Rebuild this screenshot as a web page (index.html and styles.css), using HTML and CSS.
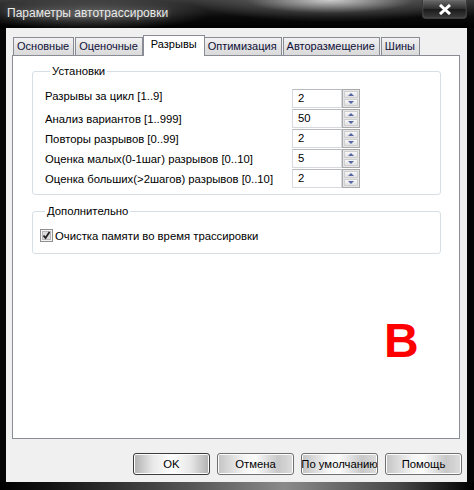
FILE: index.html
```html
<!DOCTYPE html>
<html lang="ru">
<head>
    <meta charset="UTF-8">
    <title>Параметры автотрассировки</title>
    <link rel="stylesheet" href="styles.css">
</head>
<body>
<div class="window">
    <div class="titlebar">
        <span class="title">Параметры автотрассировки</span>
        <div class="close">
            <svg width="14" height="11" viewBox="0 0 14 11"><path d="M2 1 L12 10 M12 1 L2 10" stroke="#fff" stroke-width="3"/></svg>
        </div>
    </div>

    <div class="client">
        <div class="tabs">
            <div class="tab">Основные</div>
            <div class="tab">Оценочные</div>
            <div class="tab active">Разрывы</div>
            <div class="tab">Оптимизация</div>
            <div class="tab">Авторазмещение</div>
            <div class="tab">Шины</div>
        </div>

        <div class="panel">
            <fieldset class="group group-main">
                <legend>Установки</legend>
                <div class="row">
                    <span class="lbl first">Разрывы за цикл [1..9]</span>
                    <div class="spin"><span class="val">2</span><div class="arrows"><i class="up"></i><i class="down"></i></div></div>
                </div>
                <div class="row">
                    <span class="lbl">Анализ вариантов [1..999]</span>
                    <div class="spin"><span class="val">50</span><div class="arrows"><i class="up"></i><i class="down"></i></div></div>
                </div>
                <div class="row">
                    <span class="lbl">Повторы разрывов [0..99]</span>
                    <div class="spin"><span class="val">2</span><div class="arrows"><i class="up"></i><i class="down"></i></div></div>
                </div>
                <div class="row">
                    <span class="lbl">Оценка малых(0-1шаг) разрывов [0..10]</span>
                    <div class="spin"><span class="val">5</span><div class="arrows"><i class="up"></i><i class="down"></i></div></div>
                </div>
                <div class="row">
                    <span class="lbl">Оценка больших(&gt;2шагов) разрывов [0..10]</span>
                    <div class="spin"><span class="val">2</span><div class="arrows"><i class="up"></i><i class="down"></i></div></div>
                </div>
            </fieldset>

            <fieldset class="group group-extra">
                <legend>Дополнительно</legend>
                <label class="check">
                    <svg width="13" height="13" viewBox="0 0 13 13">
                        <rect x="0.5" y="0.5" width="12" height="12" fill="#f4f4f4" stroke="#8e8f8f"/>
                        <rect x="2.5" y="2.5" width="8" height="8" fill="#dcdcdc" stroke="#b8b8b8"/>
                        <path d="M3.5 6.5 L5.5 9 L9.5 3" fill="none" stroke="#222" stroke-width="1.8"/>
                    </svg>
                    Очистка памяти во время трассировки
                </label>
            </fieldset>

            <div class="mark">B</div>
        </div>

        <div class="buttons">
            <button class="btn default">OK</button>
            <button class="btn">Отмена</button>
            <button class="btn clip"><span>По умолчанию</span></button>
            <button class="btn">Помощь</button>
        </div>
    </div>
    <div class="bottom-edge"></div>
</div>
</body>
</html>
```

FILE: styles.css
```css
body {
    margin: 0;
    background: #000;
    font-family: "Liberation Sans", Arial, sans-serif;
    font-size: 11.3px;
    color: #000;
}

.window {
    width: 474px;
    height: 490px;
    background: #050505;
    display: flex;
    flex-direction: column;
    overflow: hidden;
}

.titlebar {
    height: 28px;
    display: flex;
    align-items: flex-start;
    justify-content: space-between;
    background:
        radial-gradient(ellipse 140px 22px at 330px 0px, rgba(220,220,220,0.9), rgba(120,120,120,0.3) 60%, rgba(0,0,0,0) 100%),
        radial-gradient(ellipse 120px 16px at 90px 14px, rgba(150,150,150,0.55), rgba(0,0,0,0) 100%),
        linear-gradient(to bottom, #3a3a3a, #0a0a0a 60%, #000);
}

.title {
    margin: 6px 0 0 7px;
    font-family: "Liberation Sans", Arial, sans-serif;
    font-size: 12px;
    color: #eaeaea;
    text-shadow: 0 0 6px rgba(255,255,255,0.35);
}

.close {
    width: 43px;
    height: 18px;
    margin-right: 7px;
    display: flex;
    align-items: center;
    justify-content: center;
    border: 1px solid #3a3a3a;
    border-top: none;
    border-radius: 0 0 4px 4px;
    background: linear-gradient(to bottom, #6a6a6a, #2e2e2e 50%, #1a1a1a 51%, #3c3c3c);
    box-shadow: inset 0 0 1px #999;
}

.client {
    margin: 0 7px 0 6px;
    height: 454px;
    background: #f0f0f0;
    padding: 7px 0 0 6px;
    box-sizing: border-box;
}

.tabs {
    display: flex;
    align-items: flex-end;
    height: 20px;
    position: relative;
    z-index: 1;
    margin-left: 1px;
}

.tab {
    height: 17px;
    padding: 0 4px 0 3px;
    border: 1px solid #898c95;
    border-bottom: none;
    background: linear-gradient(to bottom, #f2f2f2, #e4e4e4 50%, #dadada);
    color: #10103a;
    font-size: 11px;
    line-height: 17px;
    margin-right: 1px;
    white-space: nowrap;
}

.tab.active {
    height: 20px;
    line-height: 16px;
    margin: 0 -1px 0 -1px;
    padding: 0 7px;
    background: #fff;
    color: #000;
    position: relative;
    top: 1px;
}

.panel {
    width: 448px;
    height: 384px;
    border: 1px solid #898c95;
    background: #fff;
    padding: 8px 18px 0 19px;
    box-sizing: border-box;
}

.group {
    margin: 0;
    padding: 11px 0 5px 12px;
    border: 1px solid #d5dfe5;
    border-radius: 3px;
}

.group legend {
    padding: 0 2px;
    margin-left: 5px;
    line-height: 14px;
}

.row {
    display: flex;
    align-items: center;
    height: 19px;
    margin-bottom: 1px;
}

.lbl {
    width: 247px;
}

.lbl.first {
    position: relative;
    top: -3px;
}

.spin {
    display: flex;
    height: 19px;
}

.val {
    width: 43px;
    height: 17px;
    border: 1px solid #d6d9dd;
    border-top-color: #b8bcc2;
    padding-left: 5px;
    line-height: 17px;
}

.arrows {
    width: 16px;
    height: 17px;
    border: 1px solid #a9a9a9;
    display: flex;
    flex-direction: column;
    background: #e6e6e6;
}

.arrows i {
    flex: 1;
    margin: 1px;
    background: linear-gradient(to bottom, #f7f7f7, #e2e2e2);
    border: 1px solid #cfcfcf;
    position: relative;
}

.arrows i.up { margin-bottom: 0; }

.arrows i::after {
    content: "";
    position: absolute;
    left: 3px;
    top: 1px;
    border-left: 3px solid transparent;
    border-right: 3px solid transparent;
}

.arrows i.up::after { border-bottom: 3px solid #5566a0; }
.arrows i.down::after { border-top: 3px solid #5566a0; }

.group-extra {
    margin-top: 9px;
    padding: 11px 0 11px 7px;
}

.check {
    display: flex;
    align-items: center;
    gap: 2px;
}

.mark {
    margin: 63px 0 0 352px;
    font-size: 48px;
    font-weight: bold;
    line-height: 1;
    color: #ff0000;
}

.buttons {
    display: flex;
    justify-content: flex-end;
    gap: 7px;
    margin: 14px 5px 0 0;
}

.btn {
    width: 77px;
    height: 22px;
    padding: 0;
    font-family: inherit;
    font-size: 11.3px;
    color: #000;
    border: 1px solid #707070;
    border-radius: 3px;
    background: linear-gradient(to right, #c4c4c4, #f4f4f4 35%, #fafafa 50%, #c8c8c8 80%, #dcdcdc);
    box-shadow: inset 0 0 0 1px #fcfcfc;
}

.btn.default {
    border-color: #3c3c3c;
    background: linear-gradient(to right, #b0b0b0, #e8e8e8 25%, #ffffff 50%, #e8e8e8 75%, #b0b0b0);
}

.btn.clip {
    display: flex;
    justify-content: center;
    align-items: center;
    overflow: hidden;
    white-space: nowrap;
}

.bottom-edge {
    height: 8px;
    background: linear-gradient(to right, #000, #111 10%, #555 40%, #8a8a8a 60%, #444 85%, #000);
}
```
